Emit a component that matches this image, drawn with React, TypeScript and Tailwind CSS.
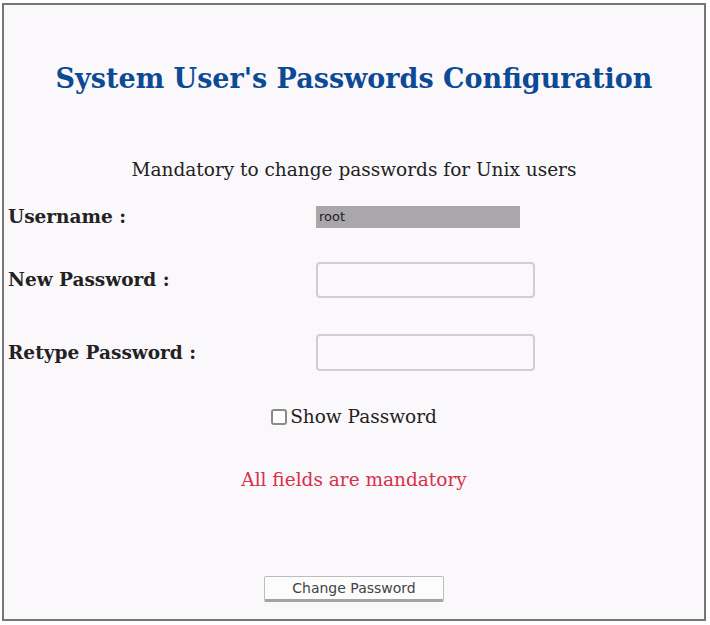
export default function App() {
  return (
    <div className="h-[625px] w-[710px] bg-white pl-[2px] pt-[3px]">
      <div className="flex h-[618px] w-[704px] flex-col border-2 border-[#767676] bg-[#faf8fb] text-[#222] [font-family:'DejaVu_Serif',serif]">
        <h1 className="mt-[58px] text-center text-[27px] font-bold leading-[32px] text-[#0c4a96] [font-family:'DejaVu_Serif',serif]">
          System User's Passwords Configuration
        </h1>

        <p className="mt-[63px] text-center text-[18.5px] leading-[24px]">
          Mandatory to change passwords for Unix users
        </p>

        <div className="mt-[23px] flex h-[24px] items-center">
          <label className="w-[312px] pl-[4px] text-[18.5px] font-bold">Username :</label>
          <div className="flex h-[22px] w-[204px] items-center bg-[#a9a7a9] pl-[3px] text-[13px] text-[#1e1e1e] [font-family:'DejaVu_Sans',sans-serif]">
            root
          </div>
        </div>

        <div className="mt-[33px] flex h-[36px] items-center">
          <label className="w-[312px] pl-[4px] text-[18.5px] font-bold">New Password :</label>
          <input
            type="password"
            className="h-[36px] w-[219px] rounded-[4px] border-2 border-[#cfcfcf] bg-[#faf8fb] outline-none"
          />
        </div>

        <div className="mt-[36px] flex h-[37px] items-center">
          <label className="w-[312px] pl-[4px] text-[18.5px] font-bold">Retype Password :</label>
          <input
            type="password"
            className="h-[37px] w-[219px] rounded-[4px] border-2 border-[#cfcfcf] bg-[#faf8fb] outline-none"
          />
        </div>

        <div className="mt-[34px] flex h-[24px] items-center justify-center gap-[3px]">
          <span className="h-[16px] w-[16px] rounded-[3px] border-2 border-[#8a8a8a] bg-white" />
          <span className="text-[18.5px]">Show Password</span>
        </div>

        <p className="mt-[39px] text-center text-[18.5px] leading-[24px] text-[#d6304a]">
          All fields are mandatory
        </p>

        <div className="mt-[84px] flex justify-center">
          <button className="h-[26px] w-[180px] rounded-[2px] border border-b-[3px] border-[#bdbdbd] border-b-[#a3a3a3] bg-[#fcfcfc] text-[14px] text-[#444] [font-family:'DejaVu_Sans',sans-serif]">
            Change Password
          </button>
        </div>
      </div>
    </div>
  );
}
